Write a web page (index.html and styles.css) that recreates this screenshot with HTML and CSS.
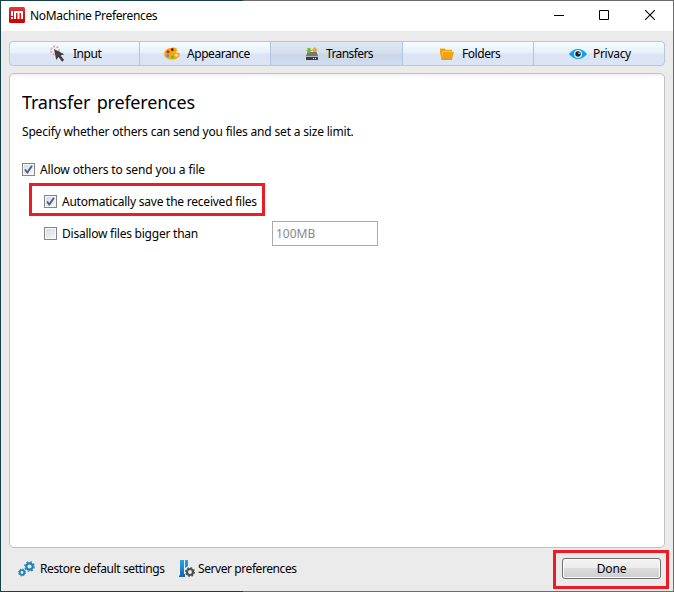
FILE: index.html
```html
<!DOCTYPE html>
<html lang="en">
<head>
<meta charset="utf-8">
<title>NoMachine Preferences</title>
<link rel="stylesheet" href="styles.css">
</head>
<body>
<div class="window">
  <header class="titlebar">
    <svg class="logo" width="16" height="16" viewBox="0 0 16 16"><defs><linearGradient id="red" x1="0" y1="0" x2="0" y2="1"><stop offset="0" stop-color="#e63a38"/><stop offset=".5" stop-color="#d91414"/><stop offset="1" stop-color="#c90000"/></linearGradient></defs><rect width="16" height="16" rx="1.500" fill="url(#red)"/><path d="M2 4h2v5H2zM2 10h2v2H2zM5 4h8.200q.8 0 .8.800V12h-2V6h-1.500v6h-2V6H7v6H5z" fill="#fff"/></svg>
    <h1 class="title">NoMachine Preferences</h1>
    <div class="controls">
      <svg width="10" height="10" viewBox="0 0 10 10"><path d="M0 5.500h10" stroke="#000"/></svg>
      <svg width="10" height="10" viewBox="0 0 10 10"><path d="M.5.500h9v9h-9z" fill="none" stroke="#000"/></svg>
      <svg width="10" height="10" viewBox="0 0 10 10"><path d="M0 0l10 10M10 0L0 10" stroke="#000" stroke-width="1.100"/></svg>
    </div>
  </header>
  <nav class="tabs">
    <a class="tab tab-input"><svg width="16" height="18" viewBox="0 0 16 18"><g fill="none" stroke="#e9a5ac" stroke-width="1.800" stroke-dasharray="2 1.300"><circle cx="5" cy="5.500" r="4"/></g><path d="M4 4l10.300 5.200-3.700 1.300 3.500 4.500-2 1.700-3.600-4.700-2.300 3z" fill="#404040"/></svg><span>Input</span></a>
    <a class="tab tab-appearance"><svg width="16" height="13" viewBox="0 0 16 13"><path d="M8 .7C11 .2 13 1 13 2.700c0 1.500-1.300 2-.5 2.800.8.700 3.300-.9 3.300 1.700 0 3-3.300 5.300-8 5.300C3 12.500.2 10 .2 7 .2 3.500 3.500 1 8 .7z" fill="#ffa50a"/><circle cx="8.300" cy="2.700" r="1.400" fill="#382020"/><circle cx="4" cy="4.700" r="1.500" fill="#d71c28"/><circle cx="3.700" cy="8.600" r="1.500" fill="#2aa8e4"/><circle cx="8.600" cy="10" r="1.600" fill="#12e812"/><circle cx="12.300" cy="8.300" r="1.300" fill="#e4eaf6"/></svg><span>Appearance</span></a>
    <a class="tab tab-transfers active"><svg width="12" height="13" viewBox="0 0 12 13"><path d="M1.500 5h9L12 9H0z" fill="#777"/><path d="M0 9h12v1H0z" fill="#b5b9c0"/><path d="M0 10h12v3H0z" fill="#3d3d3d"/><path d="M7 11h1v1H7zM9 11h1v1H9z" fill="#eee"/><path d="M1.500 1h3v2H6L3 6.500 0 3h1.500z" fill="#7ab72e"/><path d="M7 5V3.500H5.500L8.700 0 12 3.500h-1.500V5z" fill="#f9a51a"/></svg><span>Transfers</span></a>
    <a class="tab tab-folders"><svg width="14" height="12" viewBox="0 0 15 12"><path d="M0 0h5l1.300 1.500H13V3H3L1.500 11 0 5z" fill="#f4a40b"/><path d="M3.300 3.700H15L13 11H1.300z" fill="#f4a40b"/><path d="M1.300 11.500H13" stroke="#ad720c"/></svg><span>Folders</span></a>
    <a class="tab tab-privacy"><svg width="18" height="12" viewBox="0 0 18 12"><path d="M0 6Q4 1 9 1t9 5q-4 5-9 5T0 6z" fill="#00a5f4"/><circle cx="9" cy="6" r="4" fill="#e6f3fb"/><circle cx="9" cy="6" r="2.700" fill="#222"/><circle cx="10" cy="5.300" r=".8" fill="#fff"/></svg><span>Privacy</span></a>
  </nav>
  <main class="panel">
    <h2 class="heading">Transfer preferences</h2>
    <p class="description">Specify whether others can send you files and set a size limit.</p>
    <div class="row"><span class="check"><svg width="9" height="9" viewBox="0 0 9 9"><path d="M1 4.500l2.300 3L8 .8" fill="none" stroke="#4c608d" stroke-width="1.900"/></svg></span><span class="allow">Allow others to send you a file</span></div>
    <div class="row nested"><span class="check"><svg width="9" height="9" viewBox="0 0 9 9"><path d="M1 4.500l2.300 3L8 .8" fill="none" stroke="#4c608d" stroke-width="1.900"/></svg></span><span class="autosave">Automatically save the received files</span></div>
    <div class="row nested"><span class="check"></span><span class="disallow">Disallow files bigger than</span><div class="size">100MB</div></div>
  </main>
  <footer class="footer">
    <a class="link"><svg width="17" height="16" viewBox="0 0 17 16"><g fill="none" stroke="#237eb6"><circle cx="11.500" cy="5.500" r="3.200" stroke-width="2.200"/><circle cx="11.500" cy="5.500" r="4.700" stroke-width="1.300" stroke-dasharray="1.850 1.840"/><circle cx="4" cy="11.500" r="2.300" stroke-width="1.800"/><circle cx="4" cy="11.500" r="3.500" stroke-width="1" stroke-dasharray="1.400 1.350"/></g></svg><span class="restore">Restore default settings</span></a>
    <a class="link server-link"><svg width="16" height="17" viewBox="0 0 16 17"><defs><linearGradient id="blue" x1="0" y1="0" x2="0" y2="1"><stop stop-color="#25a6df"/><stop offset="1" stop-color="#1265ae"/></linearGradient></defs><path d="M1 0h4v14h1v3H0v-1l1-1zM6 0h3v6L6 8z" fill="url(#blue)"/><circle cx="11" cy="12" r="3" fill="#eee" stroke="#505050" stroke-width="2.200"/><circle cx="11" cy="12" r="4.400" fill="none" stroke="#505050" stroke-width="1.200" stroke-dasharray="1.700 1.750"/></svg><span class="server">Server preferences</span></a>
    <button class="done"><span>Done</span></button>
  </footer>
</div>
<div class="mark mark-autosave"></div>
<div class="mark mark-done"></div>
</body>
</html>
```
FILE: styles.css
```css
* { box-sizing: border-box; }
body { margin: 0; width: 674px; height: 592px; overflow: hidden; font: 12px/18px "Noto Sans", sans-serif; color: #000; }
.window { display: flex; flex-direction: column; width: 674px; height: 592px; background: linear-gradient(90deg, #16404a 242px, #6b6b6b 242px) top/100% 1px no-repeat, linear-gradient(90deg, #16404a 242px, #6b6b6b 242px) bottom/100% 1px no-repeat, #ebebeb; border-left: 1px solid #16404a; border-right: 1px solid #6b6b6b; padding: 1px 0; }
.titlebar { display: flex; align-items: center; height: 30px; padding: 0 18px 2px 8px; background: #fff; }
.title { margin: 2px auto 0 5px; font-size: 12px; font-weight: 400; white-space: nowrap; letter-spacing: -.34px; }
.controls { display: flex; gap: 35px; }
.controls svg:first-child { margin-right: 0; transform: translateX(-1px); }
.controls svg:nth-child(2) { transform: translateX(-1px); }
svg { display: block; flex: none; }
.tabs { display: grid; grid-template-columns: 130px 131px 132px 131px 130px; height: 25px; margin: 10px 8px 0; border: 1px solid #b9c5dc; border-radius: 4px; background: linear-gradient(#f7fbff, #e6f1fa 45%, #dbe4f4 55%, #dce5f5); overflow: hidden; }
.tab { display: flex; align-items: center; border-right: 1px solid #b5c4dd; gap: 7px; letter-spacing: -.45px; }
.tab:last-child { border: 0; }
.active { background: linear-gradient(#dee8f4, #d3dfee 48%, #cad7e9 55%, #d0deef); }
.tab-input { padding-left: 40px; }
.tab-appearance { padding-left: 24px; }
.tab-transfers { padding-left: 35px; gap: 8px; letter-spacing: -.6px; }
.tab-folders { padding-left: 37px; gap: 8px; }
.tab-privacy { padding-left: 35px; gap: 6px; letter-spacing: -.3px; }
.panel { height: 475px; margin: 7px 8px 0; padding: 16px 12px; border: 1px solid #c0c0c0; border-radius: 5px; background: linear-gradient(#f1f1f1, #fff 4px); }
.heading { margin: 0 0 9px; font-size: 18px; line-height: 24px; font-weight: 400; white-space: nowrap; letter-spacing: -.2px; word-spacing: 2px; }
.description { margin: 0 0 13px; white-space: nowrap; letter-spacing: -.18px; }
.row { display: flex; align-items: center; height: 32px; gap: 5px; white-space: nowrap; }
.nested { padding-left: 22px; }
.check { display: grid; place-items: center; width: 13px; height: 13px; margin-bottom: 2px; border: 1px solid #858585; box-shadow: inset 0 0 0 1px #f8f8f8; background: linear-gradient(135deg, #d5dae0, #f7f7f7); }
.allow { letter-spacing: -.13px; }
.autosave { letter-spacing: -.23px; }
.disallow { width: 205px; letter-spacing: -.23px; }
.size { width: 106px; height: 25px; margin-bottom: 2px; border: 1px solid #aaa; padding: 3px; line-height: 17px; color: #888; }
.footer { display: flex; align-items: center; height: 41px; padding: 0 12px 0 17px; white-space: nowrap; }
.link { display: flex; align-items: center; gap: 5px; width: 161px; }
.restore { letter-spacing: -.39px; }
.server-link { gap: 3px; }
.server { letter-spacing: -.42px; }
.done { width: 99px; height: 21px; margin-left: auto; padding: 0; font: inherit; line-height: 19px; letter-spacing: -.2px; color: #000; border: 1px solid #707070; border-radius: 3px; background: linear-gradient(#f4f4f4, #ececec 48%, #dcdcdc 50%, #cfcfcf); box-shadow: inset 0 0 0 1px #fafafa; }
.mark { position: absolute; border: 3px solid #ed1c24; }
.mark-autosave { left: 29px; top: 183px; width: 236px; height: 33px; }
.mark-done { left: 553px; top: 550px; width: 116px; height: 39px; }
```
